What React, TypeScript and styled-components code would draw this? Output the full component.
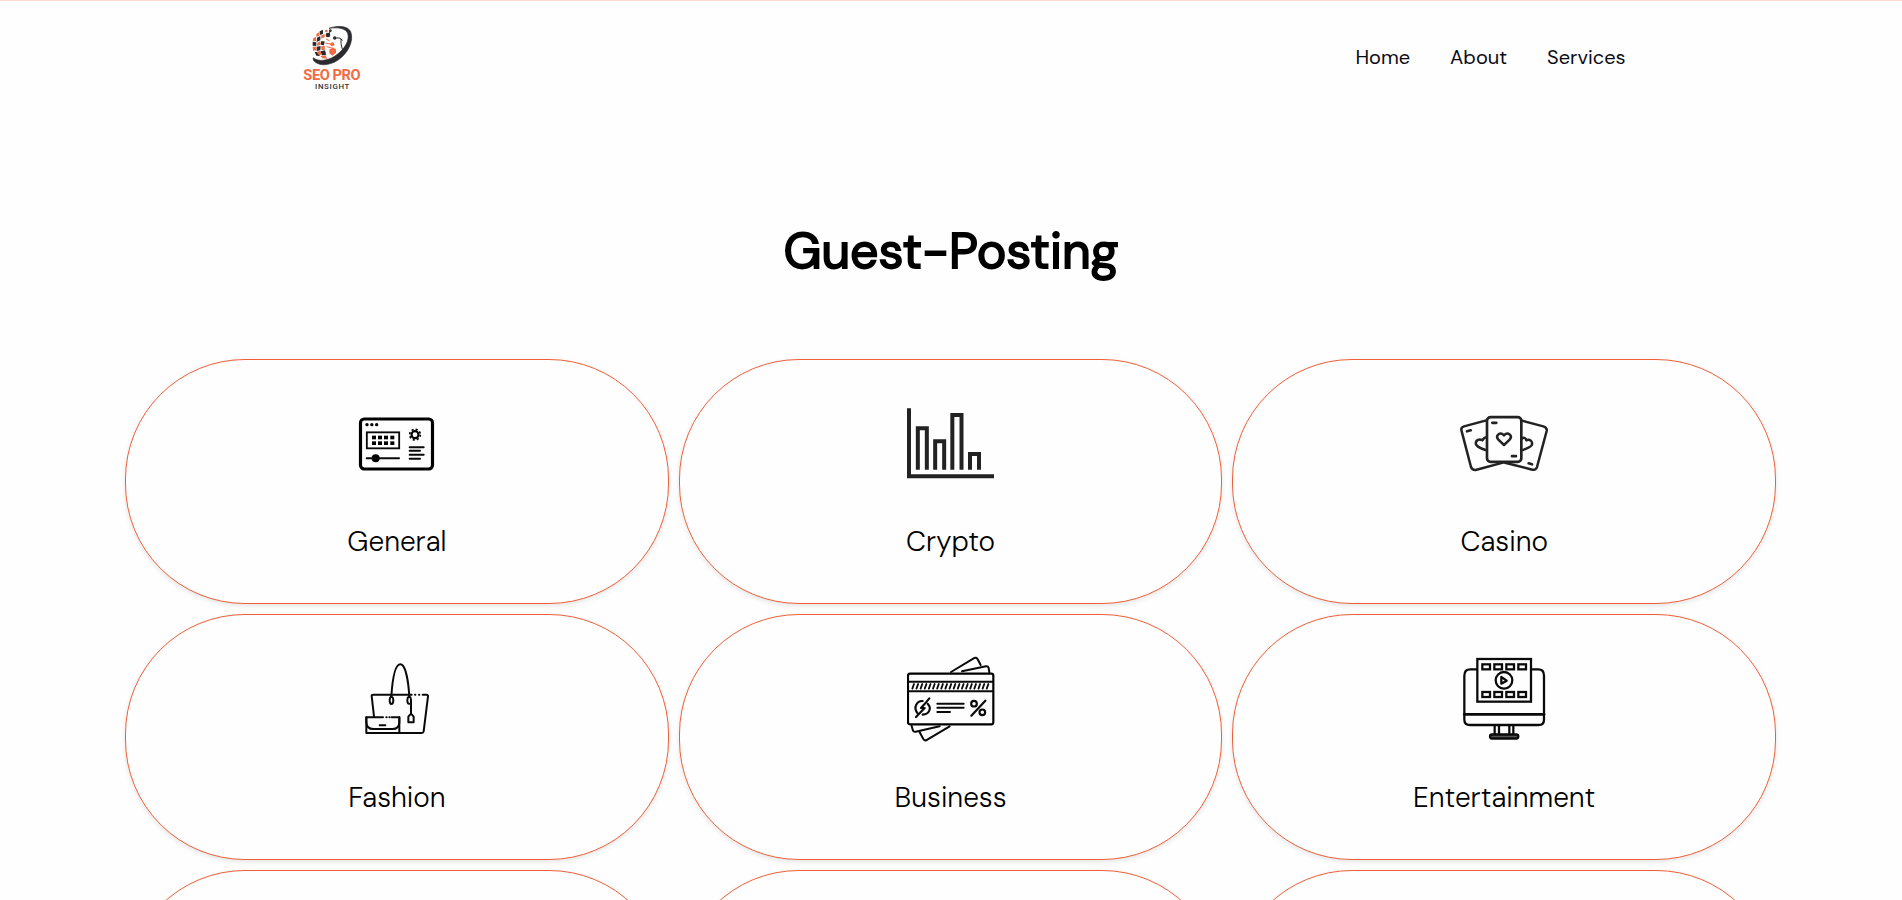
import { ReactNode } from "react";
import styled, { createGlobalStyle } from "styled-components";

const GlobalStyle = createGlobalStyle`
  * {
    box-sizing: border-box;
  }
  body {
    margin: 0;
    height: 900px;
    overflow: hidden;
    background-color: #fefefe;
    color: #000;
    font-family: "DM Sans", Inter, "Liberation Sans", sans-serif;
  }
`;

const Wrapper = styled.div`
  height: 900px;
  overflow: hidden;
  border-top: 1px solid #fbdcd2;
`;

const Header = styled.header`
  display: flex;
  justify-content: space-between;
  align-items: center;
  height: 108px;
  padding: 0 276.4px 0 290px;
`;

const Logo = styled.svg`
  width: 90px;
  height: 90px;
  display: block;
`;

const Nav = styled.nav`
  display: flex;
  gap: 40px;
  margin-top: 4px;
`;

const NavItem = styled.a`
  font-size: 20px;
  line-height: 28px;
  font-weight: 370;
  color: #0b0b14;
  cursor: pointer;
`;

const Title = styled.h1`
  margin: 108px 0 73px;
  text-align: center;
  font-size: 50px;
  line-height: 69px;
  font-weight: 400;
  -webkit-text-stroke: 1.8px #000;
`;

const Grid = styled.main`
  display: grid;
  grid-template-columns: repeat(3, 543.67px);
  grid-auto-rows: 245.4px;
  gap: 10px;
  padding-left: 125.1px;
`;

const Card = styled.div`
  display: flex;
  flex-direction: column;
  align-items: center;
  padding-top: 40.2px;
  border: 1px solid #f05f38;
  border-radius: 120px;
  background-color: #fefefe;
  box-shadow: 0 2px 5px rgba(0, 0, 0, 0.1);
`;

const Icon = styled.svg`
  width: 88px;
  height: 88px;
  display: block;
  flex-shrink: 0;
  fill: none;
  stroke: #0a0a0a;
  stroke-linecap: round;
  stroke-linejoin: round;
`;

const Label = styled.h2`
  margin: 34px 0 0;
  font-size: 28px;
  line-height: 40px;
  font-weight: 355;
  white-space: nowrap;
`;

function GeneralIcon() {
  return (
    <Icon viewBox="39 0 264 264">
      <rect x="61.5" y="57" width="216" height="150" rx="11" strokeWidth="9.5" stroke="#000" />
      <g fill="#000" stroke="none">
        <circle cx="81" cy="74" r="5" />
        <circle cx="95.5" cy="74" r="5" />
        <circle cx="110" cy="74" r="5" />
        {[96, 114, 132, 151].map((x) => (
          <g key={x}>
            <rect x={x} y="107" width="12" height="11" />
            <rect x={x} y="124" width="12" height="11" />
          </g>
        ))}
        <circle cx="107" cy="175" r="12" />
      </g>
      <rect x="80.5" y="97" width="97" height="48" strokeWidth="5.5" strokeLinejoin="miter" />
      <path d="M80 175H177" strokeWidth="6" />
      <circle cx="225" cy="104" r="10.5" strokeWidth="6.5" stroke="#000" />
      <circle
        cx="225"
        cy="104"
        r="16"
        strokeWidth="5"
        strokeLinecap="butt"
        strokeDasharray="6.28 6.286"
        stroke="#000"
      />
      <path d="M209 141.5H251M209 152.5H240M209 164.5H251M209 176H240" strokeWidth="6" />
    </Icon>
  );
}

function CryptoIcon() {
  return (
    <Icon viewBox="51 15 264 264">
      <g stroke="#222" strokeWidth="12" strokeLinecap="butt" strokeLinejoin="miter">
        <path d="M57 40V243.5H312" />
        <path d="M83.5 224V99.5H110.5V224" />
        <path d="M135.5 224V138.5H162.5V224" />
        <path d="M187 224V60H214.5V224" />
        <path d="M240 224V177H267V224" />
      </g>
    </Icon>
  );
}

function CasinoIcon() {
  return (
    <Icon viewBox="60 15 264 264">
      <g stroke="#222" strokeWidth="7.5">
        <path d="M139 76L72 94Q62 97 64.5 107L93 216Q97 226 107 225L189 203" />
        <path d="M246 77L310 94Q322 98 320 108L291 216Q288 226 277 224L195 203" />
        <path d="M139 128C133 126 131 131 127 136C117 129 105 137 108 148C112 158 124 160 136 165" />
        <path d="M246 131C252 125 258 130 259 136C270 131 278 139 276 149C273 157 260 160 249 165" />
        <rect x="141" y="66.5" width="103" height="134" rx="11" strokeWidth="8" fill="#fefefe" />
        <path d="M192 150L175 134C165 122 180 108 192 121C204 108 219 122 209 134Z" />
      </g>
      <path d="M157 83.5H169M216 183.5H228M81 109L92 106M266 205L276 208" strokeWidth="8" stroke="#222" />
    </Icon>
  );
}

function FashionIcon() {
  return (
    <Icon viewBox="39 18 264 264">
      <g strokeWidth="6">
        <path d="M102 199L95 138Q95 134 100 134H215M248 134H260Q264 134 264 139L251 244Q250 249 245 249H79V202H129M155 202H178V249" />
        <path d="M225 134H226M237 134H238M139 202H140M148 202H149" />
        <path d="M79 202V217Q80 237 100 237H158Q177 237 178 217V202M119 226H136" />
        <path d="M154 139C157 94 164 43 181 43C197 43 205 94 208 139" />
        <path d="M154 139Q149 142 149 150Q149 162 154 162Q160 162 160 150Q160 142 154 139ZM207 139Q202 142 202 150Q202 162 208 161" />
        <path d="M208 139Q213 142 213 150V191M213 191L205 200V217H221V200Z" />
      </g>
    </Icon>
  );
}

function BusinessIcon() {
  return (
    <Icon viewBox="66 33 264 264">
      <g strokeWidth="6">
        <path d="M198 81L266 40Q274 35 278 43L287 60M231 79L303 64Q309 63 311 69L313 82" />
        <path d="M80 243L84 257Q86 261 92 260L164 244M104 262L115 282Q120 289 127 284L194 244" />
      </g>
      <rect x="69" y="86" width="256" height="152" rx="6" strokeWidth="6.5" stroke="#000" />
      <path d="M71 110.5H323M71 139H323" strokeWidth="6" />
      <path
        d={Array.from({ length: 19 }, (_, i) => `M${82 + i * 12.4} 131L${87 + i * 12.4} 117`).join("")}
        strokeWidth="5.5"
      />
      <path d="M157 176H236M157 188H236M157 201H195" strokeWidth="6" />
      <g strokeWidth="6.5">
        <path d="M301 167L259 212" />
        <circle cx="267" cy="176" r="8.5" />
        <circle cx="292" cy="202" r="8.5" />
        {/* split coin with a flash through it */}
        <path d="M133 160L118 178L108 189H119L93 216" />
        <path d="M113 168C96 167 84 187 97 204M128 176C141 189 133 208 113 209" />
      </g>
    </Icon>
  );
}

function EntertainmentIcon() {
  return (
    <Icon viewBox="180 33 264 264">
      <g strokeWidth="6.8">
        <path d="M231 73H211Q193 73 193 92V224Q193 240 211 240H415Q432 240 432 224V92Q432 73 415 73H396" />
        <path d="M193 208H432" strokeWidth="8" />
        <rect x="232" y="42" width="161" height="128" strokeLinejoin="miter" />
        <circle cx="312" cy="106" r="25" />
        <path d="M304 96V116L320 107Z" />
        {[247, 283, 319, 355].map((x) => (
          <g key={x} strokeLinejoin="miter">
            <rect x={x} y="58" width="23" height="15" />
            <rect x={x} y="141" width="23" height="15" />
          </g>
        ))}
        <path d="M284 242V267M297 242V267M328 242V267M340 242V267" />
        <rect x="270" y="268.5" width="85" height="12" rx="6" fill="#555" />
      </g>
    </Icon>
  );
}

function BrandLogo() {
  return (
    <Logo viewBox="0 0 270 270">
      {/* orbit ring, thick on the right and thin at both ends */}
      <path
        d="M117 55C145 45 174 48 182 65C192 91 176 129 143 151C118 167 88 169 73 154C70 151 69 147 70 143C85 156 112 153 135 138C164 119 180 91 173 70C167 55 144 51 117 55Z"
        fill="#2b2b2f"
        stroke="#2b2b2f"
        strokeWidth="2"
      />
      <g fill="#2b2b2f">
        <path d="M89 64L99 59L99 71L89 76ZM81 83L91 78L91 91L80 96ZM68 95L79 97L79 108L68 107ZM93 94L104 94L102 106L92 104ZM80 110L92 108L91 121L80 123ZM91 124L105 121L109 134L96 136ZM74 126L83 126L90 138L79 137Z" />
        <circle cx="114" cy="75" r="7" />
        <circle cx="134" cy="84" r="5" />
        <circle cx="160" cy="120" r="4" />
        <circle cx="121" cy="62" r="4" />
      </g>
      <g fill="#f26b43">
        <path d="M79 72L87 67L87 77L79 81ZM70 84L78 81L78 93L68 93ZM94 76L104 72L104 82L94 86ZM82 98L91 94L91 105L81 107ZM68 110L79 110L79 121L69 122ZM94 108L104 108L105 119L94 120ZM80 125L91 123L95 134L86 135ZM91 138L106 136L112 146L98 145ZM118 118L130 113L138 118L138 128L127 137L118 130Z" />
        <circle cx="127" cy="103" r="6" />
        <circle cx="109" cy="63" r="4" />
      </g>
      <g fill="none" strokeWidth="3">
        <path d="M116 76L121 62M134 84L148 84L158 91M153 86L153 101L157 118" stroke="#2b2b2f" />
        <path d="M106 99L126 103M108 87L118 92M110 110L130 115" stroke="#f26b43" />
      </g>
      <text
        x="40"
        y="211"
        fill="#f26b43"
        fontFamily="Roboto, sans-serif"
        fontWeight="700"
        fontSize="44"
        textLength="172"
      >
        SEO PRO
      </text>
      <text
        x="75"
        y="236"
        fill="#333"
        fontFamily="Roboto, sans-serif"
        fontWeight="500"
        fontSize="23.5"
        textLength="103"
      >
        INSIGHT
      </text>
    </Logo>
  );
}

interface ICategory {
  name: string;
  icon: ReactNode;
}

const categories: ICategory[] = [
  { name: "General", icon: <GeneralIcon /> },
  { name: "Crypto", icon: <CryptoIcon /> },
  { name: "Casino", icon: <CasinoIcon /> },
  { name: "Fashion", icon: <FashionIcon /> },
  { name: "Business", icon: <BusinessIcon /> },
  { name: "Entertainment", icon: <EntertainmentIcon /> },
];

function App() {
  return (
    <>
      <GlobalStyle />
      <Wrapper>
        <Header>
          <BrandLogo />
          <Nav>
            <NavItem>Home</NavItem>
            <NavItem>About</NavItem>
            <NavItem>Services</NavItem>
          </Nav>
        </Header>
        <Title>Guest-Posting</Title>
        <Grid>
          {categories.map(({ name, icon }) => (
            <Card key={name}>
              {icon}
              <Label>{name}</Label>
            </Card>
          ))}
          {/* next row, cut off by the fold */}
          <Card />
          <Card />
          <Card />
        </Grid>
      </Wrapper>
    </>
  );
}

export default App;
